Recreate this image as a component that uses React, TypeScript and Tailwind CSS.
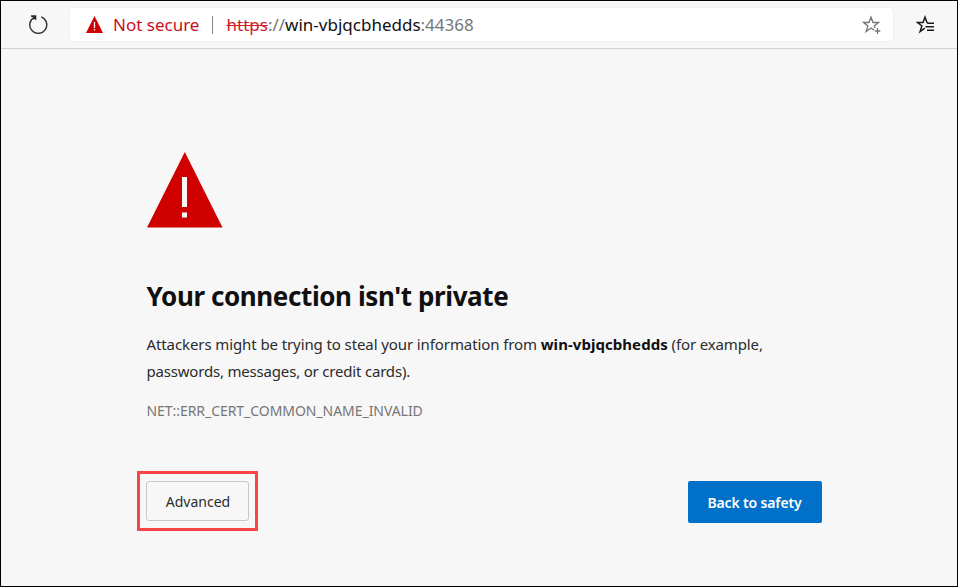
function ReloadIcon() {
  return (
    <svg width="20" height="20" viewBox="0 0 20 20" fill="none" stroke="#3a3a3a" strokeWidth="1.5">
      <path d="M13.2 2.9A8.5 8.5 0 1 1 6.2 3.4" />
      <path d="M3 1.2H8.3V6.6L6.7 5L5.4 5.7L4.6 4.6L6 3.4L3 2.8Z" fill="#2b2b2b" stroke="none" />
    </svg>
  );
}

function StarPlusIcon() {
  return (
    <svg width="20" height="20" viewBox="0 0 20 20" fill="none" stroke="#767676" strokeWidth="1.3">
      <path d="M12 15L9 13L4.1 16.6L5.9 11L1.6 7.5H7L9 2.2L11 7.5H16.4L12.3 10.9L12.9 13" />
      <path d="M15.5 13V19M12.7 16H18.3" strokeWidth="1.3" />
    </svg>
  );
}

function StarListIcon() {
  return (
    <svg width="20" height="20" viewBox="0 0 20 20" fill="none" stroke="#1b1b1b" strokeWidth="1.5">
      <path d="M8.8 13.2L4.1 16.6L5.9 10.9L1.6 7.5H7L9 2.2L11 7.5L12 8.2H18" />
      <path d="M9.5 11.7H18M11 15.2H18" />
    </svg>
  );
}

export default function App() {
  return (
    <div className="flex h-[587px] w-[958px] flex-col overflow-hidden border border-black bg-[#f7f7f7] font-['Noto_Sans','Open_Sans',sans-serif] text-[#101010]">
      <header className="flex h-12 shrink-0 items-start border-b border-[#d2d2d2]">
        <button className="ml-[27px] mt-[13px]">
          <ReloadIcon />
        </button>
        <div className="ml-[22px] mt-[7px] flex h-[33px] w-[823px] items-center rounded bg-white pl-4 shadow-[0_0_3px_rgba(0,0,0,0.06)]">
          <svg className="-mt-px" width="17" height="17" viewBox="0 0 17 17">
            <path d="M8.5 0L17 17H0Z" fill="#d00000" />
            <path d="M8.5 6V12M8.5 13V14.6" stroke="#fff" strokeWidth="1.3" />
          </svg>
          <span className="ml-[10px] w-[99px] whitespace-nowrap text-[17px] leading-6 text-[#c9101a]">Not secure</span>
          <span className="h-[18px] w-px shrink-0 bg-[#8a8a8a]" />
          <span className="ml-[13.5px] whitespace-nowrap text-[17px] leading-6 text-[#767676]">
            <span className="text-[#d0202a] line-through decoration-1">https</span>://
            <span className="text-[#101010]">win-vbjqcbhedds</span>:44368
          </span>
          <button className="ml-auto mr-[11px]">
            <StarPlusIcon />
          </button>
        </div>
        <button className="ml-[23px] mt-[14px]">
          <StarListIcon />
        </button>
      </header>

      <main className="ml-[145.5px] mt-[103px] w-[675px]">
        <svg width="76" height="76" viewBox="0 0 76 76">
          <path d="M37.8 0L75.5 75.5H0Z" fill="#d00000" />
          <path d="M35 25H40V55H35ZM35 60.5H40V65.5H35Z" fill="#f7f7f7" />
        </svg>
        <h1 className="mt-[50px] whitespace-nowrap text-[26px] font-bold leading-[36px] tracking-[-0.4px]">Your connection isn't private</h1>
        <p className="mt-[17px] text-[15px] leading-[27px] text-[#2b2b2b]">
          <span className="block whitespace-nowrap tracking-[-0.1px]">
            Attackers might be trying to steal your information from{' '}
            <b className="tracking-[0.05px] text-[#101010]">win-vbjqcbhedds</b>
            <span className="tracking-[-0.13px]"> (for example,</span>
          </span>
          <span className="block whitespace-nowrap tracking-[-0.19px]">passwords, messages, or credit cards).</span>
        </p>
        <p className="mt-[14px] whitespace-nowrap text-[14px] leading-6 tracking-[-0.05px] text-[#767676]">NET::ERR_CERT_COMMON_NAME_INVALID</p>
        <div className="mt-12 flex items-start justify-between">
          <div className="-ml-[9.5px] flex h-[60px] w-[121px] items-center justify-center border-[3px] border-[#fb4447]">
            <button className="h-10 w-[103px] rounded-[3px] border border-[#c8c8c8] pl-px text-[14px] text-[#2b2b2b]">Advanced</button>
          </div>
          <button className="mt-[10px] h-[42px] w-[134px] rounded-[2px] bg-[#0070c9] text-[14px] font-semibold tracking-[-0.15px] text-white">Back to safety</button>
        </div>
      </main>
    </div>
  );
}
